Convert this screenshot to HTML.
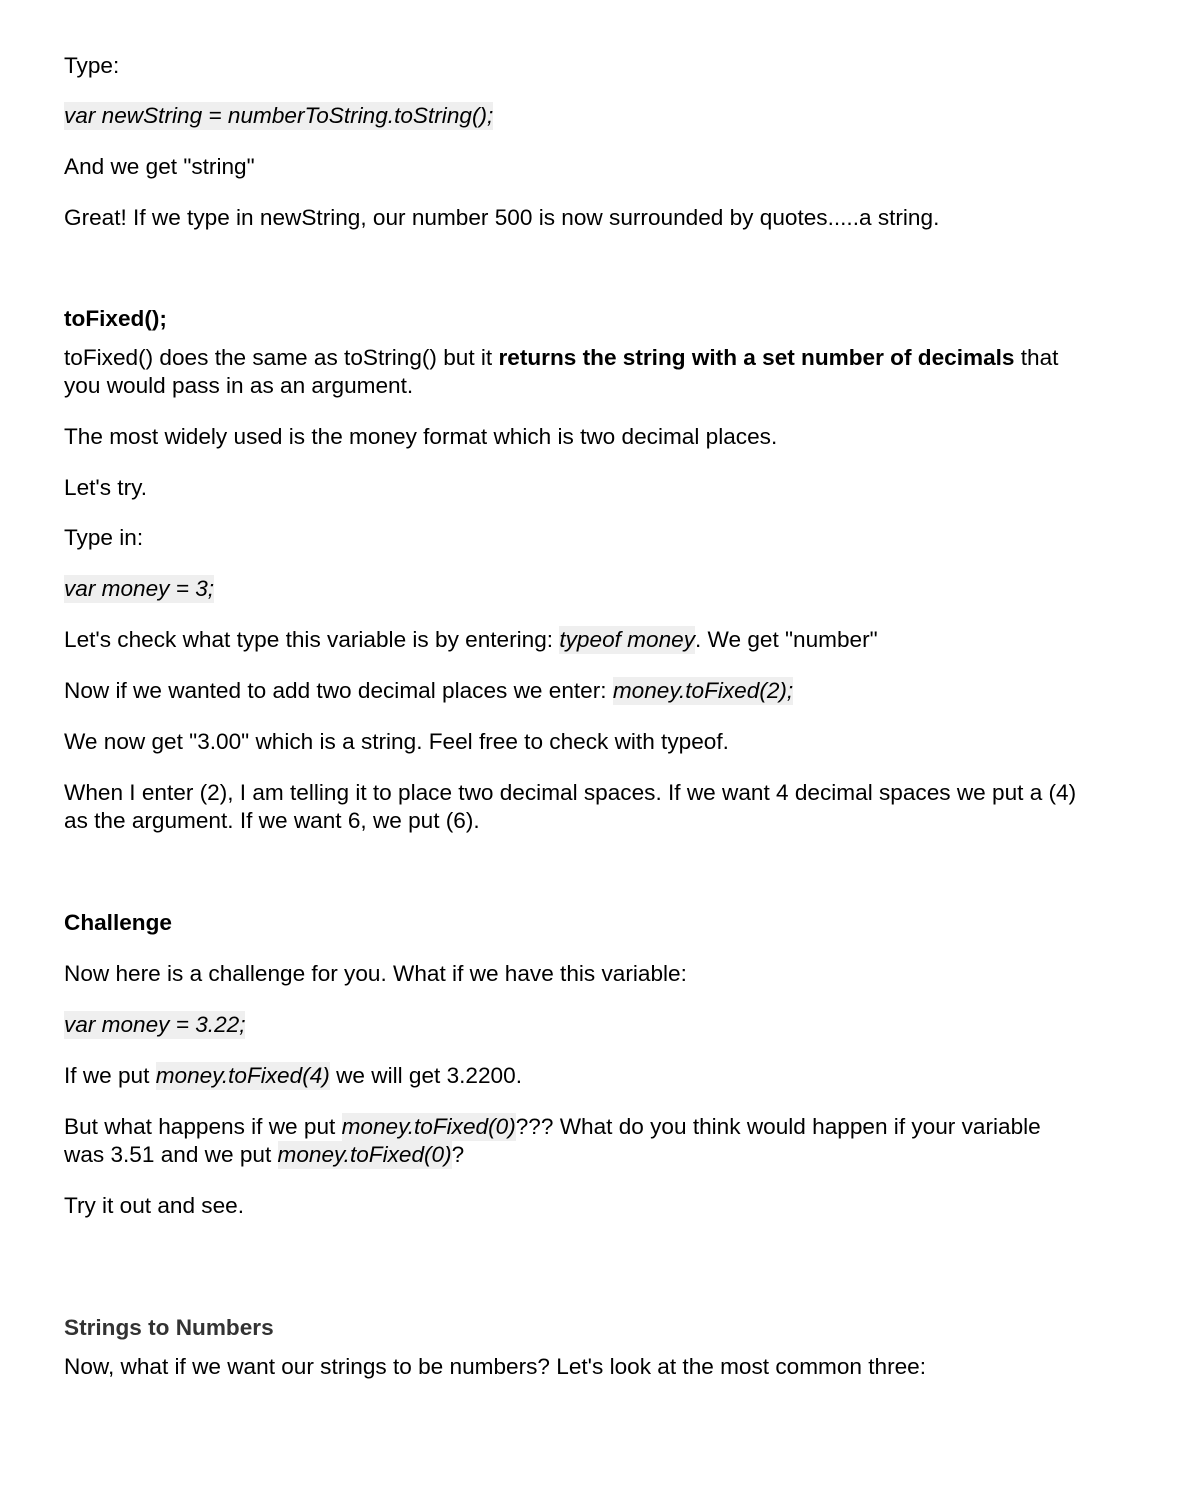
<!DOCTYPE html>
<html><head><meta charset="utf-8"><style>
html,body{margin:0;padding:0;background:#fff;}
body{width:1182px;height:1504px;position:relative;font-family:"Liberation Sans",Arial,sans-serif;font-size:22.6px;color:#000;}
.l{position:absolute;left:64px;line-height:28px;white-space:nowrap;}
.c{background:#efefef;font-style:italic;padding:1px 0 2px;}
b{font-weight:bold;}
.g{color:#333;}
</style></head><body>
<div class="l" style="top:52px">Type:</div>
<div class="l" style="top:102px"><span class="c">var newString = numberToString.toString();</span></div>
<div class="l" style="top:153px">And we get "string"</div>
<div class="l" style="top:204px">Great! If we type in newString, our number 500 is now surrounded by quotes.....a string.</div>
<div class="l" style="top:305px"><b>toFixed();</b></div>
<div class="l" style="top:344px">toFixed() does the same as toString() but it <b>returns the string with a set number of decimals</b> that</div>
<div class="l" style="top:372px">you would pass in as an argument.</div>
<div class="l" style="top:423px">The most widely used is the money format which is two decimal places.</div>
<div class="l" style="top:474px">Let's try.</div>
<div class="l" style="top:524px">Type in:</div>
<div class="l" style="top:575px"><span class="c">var money = 3;</span></div>
<div class="l" style="top:626px">Let's check what type this variable is by entering: <span class="c">typeof money</span>. We get "number"</div>
<div class="l" style="top:677px">Now if we wanted to add two decimal places we enter: <span class="c">money.toFixed(2);</span></div>
<div class="l" style="top:728px">We now get "3.00" which is a string. Feel free to check with typeof.</div>
<div class="l" style="top:779px">When I enter (2), I am telling it to place two decimal spaces. If we want 4 decimal spaces we put a (4)</div>
<div class="l" style="top:807px">as the argument. If we want 6, we put (6).</div>
<div class="l" style="top:909px"><b>Challenge</b></div>
<div class="l" style="top:960px">Now here is a challenge for you. What if we have this variable:</div>
<div class="l" style="top:1011px"><span class="c">var money = 3.22;</span></div>
<div class="l" style="top:1062px">If we put <span class="c">money.toFixed(4)</span> we will get 3.2200.</div>
<div class="l" style="top:1113px">But what happens if we put <span class="c">money.toFixed(0)</span>??? What do you think would happen if your variable</div>
<div class="l" style="top:1141px">was 3.51 and we put <span class="c">money.toFixed(0)</span>?</div>
<div class="l" style="top:1192px">Try it out and see.</div>
<div class="l g" style="top:1314px"><b>Strings to Numbers</b></div>
<div class="l" style="top:1353px">Now, what if we want our strings to be numbers? Let's look at the most common three:</div>
</body></html>
